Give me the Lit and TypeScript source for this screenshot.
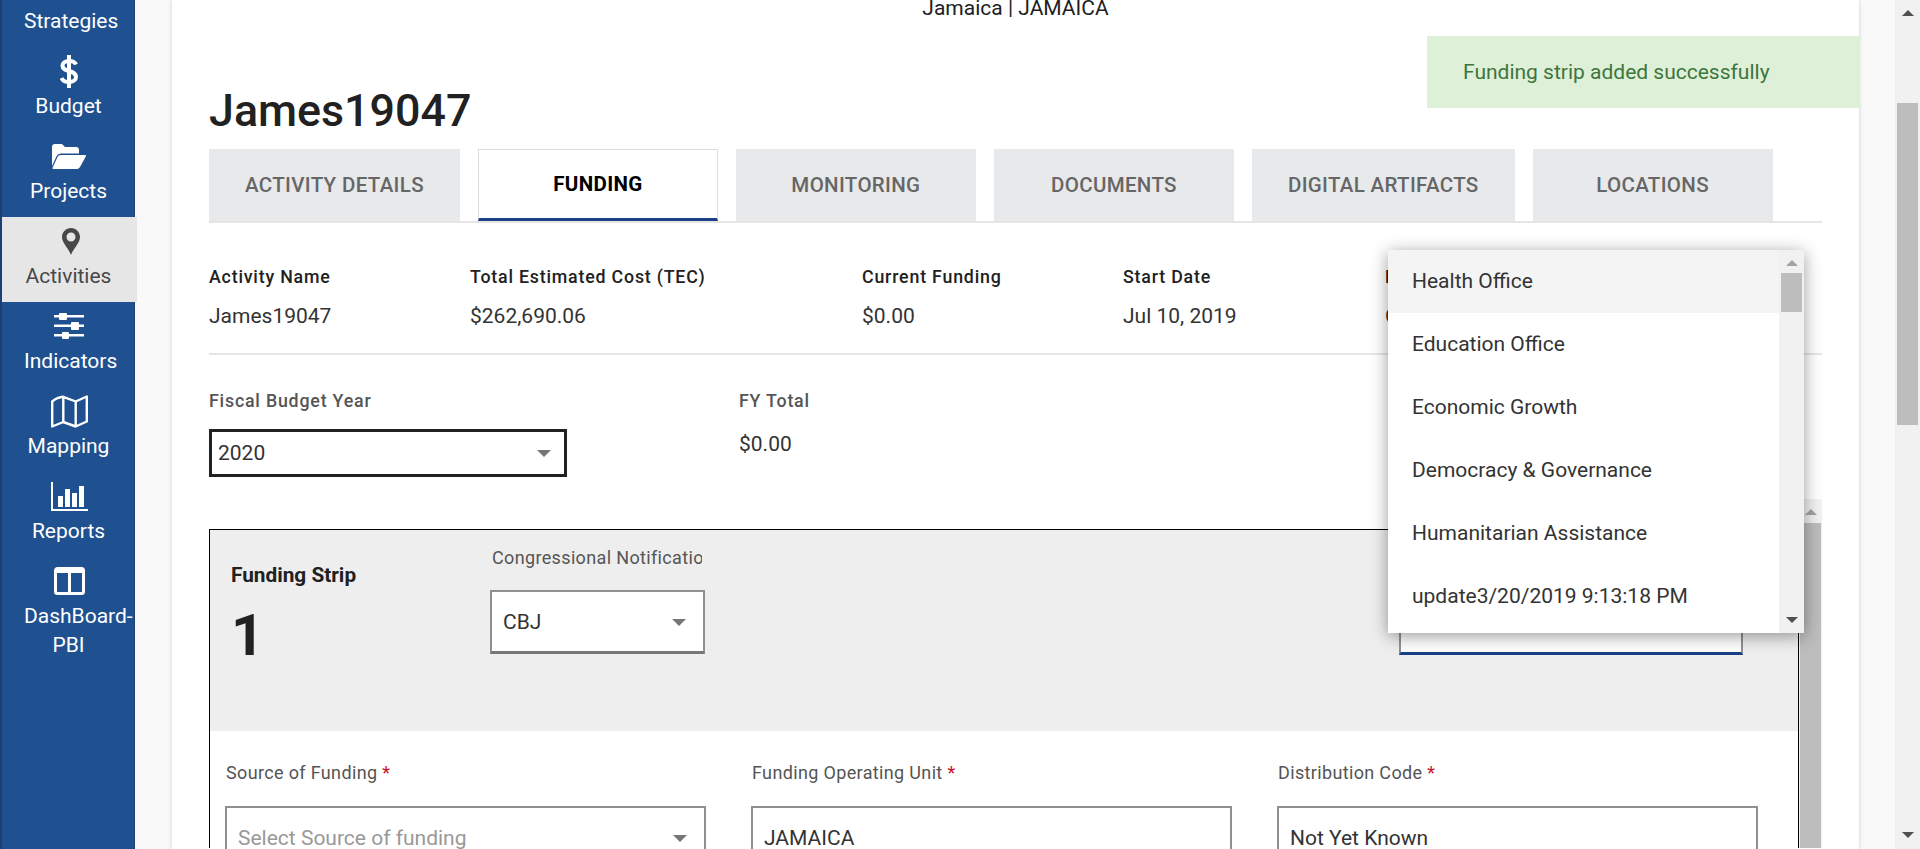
import { LitElement, html, css, svg } from "lit";
import { customElement } from "lit/decorators.js";

const icons: Record<string, unknown> = {
  dollar: svg`<svg class="i" width="18" height="33" viewBox="0 0 18 33"><path d="M16 9.500C15 7 12.500 6 9 6 5 6 2.500 7.800 2.500 10.800 2.500 17.500 16 14.500 16 22 16 25.200 13 27 9 27 5 27 2.700 25.500 1.500 23" fill="none" stroke="#fff" stroke-width="4"/><path d="M7 0h4v33H7z" fill="#fff"/></svg>`,
  folder: svg`<svg class="i" width="34" height="25" viewBox="0 0 34 25"><path d="M0 22V3a3 3 0 0 1 3-3h7l3 3h11a3 3 0 0 1 3 3v3.500H9a5 5 0 0 0-4.500 2.800Z" fill="#fff"/><path d="M8 11h25a1 1 0 0 1 .8 1.500L28 23a4 4 0 0 1-3 2H1.500a1 1 0 0 1-.8-1.500L5.500 13A4 4 0 0 1 8 11Z" fill="#fff"/></svg>`,
  pin: svg`<svg class="i" width="18" height="27" viewBox="0 0 18 27"><path fill-rule="evenodd" d="M9 0C4 0 0 4 0 9c0 6 7 12 9 18 2-6 9-12 9-18 0-5-4-9-9-9Zm0 4.500a4.500 4.500 0 1 1 0 9 4.500 4.500 0 0 1 0-9Z" fill="#484848"/></svg>`,
  sliders: svg`<svg class="i" width="30" height="27" viewBox="0 0 30 27"><g fill="#fff"><path d="M0 2h30v2.500H0zM0 11.500h30V14H0zM0 21h30v2.500H0z"/><rect x="5" y="0" width="8" height="7" rx="1"/><rect x="17" y="9" width="8" height="8" rx="1"/><rect x="8" y="19" width="7" height="7" rx="1"/></g></svg>`,
  map: svg`<svg class="i" width="37" height="33" viewBox="0 0 37 33"><path d="M1.200 6.500C6 2.500 9 2 12.300 1.800L24.700 6.500 35.800 1.500V26.500L24.700 31.500 12.300 27 1.200 31.500ZM12.300 1.800V27M24.700 6.500V31.500" fill="none" stroke="#fff" stroke-width="2.400" stroke-linejoin="round"/></svg>`,
  bars: svg`<svg class="i" width="37" height="29" viewBox="0 0 37 29"><g fill="#fff"><path d="M0 0h2v27h35v2H0z"/><rect x="7" y="14" width="5" height="11"/><rect x="14" y="7" width="5" height="18"/><rect x="21" y="11" width="5" height="14"/><rect x="28" y="4" width="5" height="21"/></g></svg>`,
  cols: svg`<svg class="i" width="31" height="28" viewBox="0 0 31 28"><path d="M3.500 1.500h24a2 2 0 0 1 2 2v21a2 2 0 0 1-2 2h-24a2 2 0 0 1-2-2v-21a2 2 0 0 1 2-2ZM15.500 4v22M2 4.500h27" fill="none" stroke="#fff" stroke-width="3"/></svg>`,
};

@customElement("app-root")
export class AppRoot extends LitElement {
  static styles = css`
    :host { display: flex; width: 1920px; height: 849px; overflow: hidden; background: #f9f9f9;
      font-family: Roboto, "Liberation Sans", sans-serif; color: #212121; }
    * { box-sizing: border-box; }
    .side { width: 135px; flex: none; height: 849px; background: #1f5190; border-left: 2px solid #1a4076; border-right: 1px solid #1a4076; position: relative; }
    .side-in { margin-top: -38px; }
    .nav { height: 85px; padding-top: 5px; color: #fff; font-size: 21px; line-height: 29px; }
    .nav .ic { height: 38px; display: flex; align-items: center; justify-content: center; padding-left: 2px; }
    .nav .tx { width: 89px; margin: 2px 0 0 22px; text-align: center; }
    .nav.on { background: #e6e6e6; color: #484848; width: 135px; }
    .nav.two { height: 120px; }
    .i { display: block; }
    .main { flex: 1; min-width: 0; padding: 0 36px 0 37px; }
    .card { height: 849px; background: #fff; box-shadow: 0 0 4px rgba(0,0,0,.18); padding: 0 37px; position: relative; overflow: hidden; }
    .ctx { height: 18px; line-height: 18px; margin-top: -1px; text-align: center; font-size: 21px; color: #212121; }
    h1 { margin: 63px 0 0; font-size: 44.800px; line-height: 62px; font-weight: 500; height: 69px; }
    .toast { position: absolute; left: 1255px; right: 0; top: 36px; height: 72px; background: #dff0d8; color: #3c763d; font-size: 21px; line-height: 72px; padding-left: 36px; border-radius: 2px 0 0 2px; }
    .tabs { display: flex; gap: 18px; height: 74px; border-bottom: 2px solid #e5e5e5; }
    .tab { min-width: 240px; padding: 0 36px; height: 72px; background: #e8e9eb; color: #666; font-size: 20.500px; font-weight: 500; line-height: 72px; text-align: center; letter-spacing: .34px; }
    .tab.on { background: #fff; color: #000; font-weight: 700; border: 1px solid #ddd; border-bottom: 3px solid #1a4185; line-height: 69px; }
    .info { display: flex; height: 132px; border-bottom: 2px solid #e5e5e5; padding-top: 42px; }
    .col { flex: none; }
    .lbl { font-size: 17.800px; font-weight: 500; letter-spacing: .8px; line-height: 24px; }
    .val { font-size: 21px; line-height: 24px; margin-top: 15px; color: #333; }
    .fy { display: flex; height: 144px; padding-top: 34px; }
    .fy .lbl { color: #555; }
    .fy .val { margin-top: 19px; }
    .fy .sel-wrap { width: 530px; }
    .sel { position: relative; background: #fff; border: 2px solid #909090; font-size: 21px; color: #333; display: flex; align-items: center; }
    .sel::after { content: ""; position: absolute; right: 17px; top: 50%; margin-top: -3px; border: 7.500px solid transparent; border-top: 7.500px solid #777; border-bottom: 0; }
    .sel.noarrow::after { display: none; }
    .sel.year { width: 358px; height: 48px; border: 3px solid #212121; margin-top: 16px; padding-left: 6px; }
    .sel.year::after { right: 13px; }
    .lower { display: flex; height: 349px; }
    .strip { flex: 1; min-width: 0; margin-top: 30px; border: 1px solid #000; border-bottom: 0; }
    .strip-head { height: 201px; background: #eee; display: flex; padding-left: 21px; position: relative; }
    .fs { width: 259px; padding-top: 32px; }
    .fs b { display: block; font-size: 20.800px; font-weight: 700; line-height: 26px; }
    .fs .n { font-size: 58px; font-weight: 700; line-height: 58px; margin-top: 18px; }
    .cn { width: 215px; padding-top: 16px; }
    .cn .t { font-size: 18px; line-height: 24px; letter-spacing: .35px; color: #555; width: 212px; overflow: hidden; white-space: nowrap; padding-left: 2px; }
    .cn .sel { height: 64px; margin-top: 20px; padding-left: 11px; border-bottom: 3px solid #777; width: 215px; }
    .focus { position: absolute; left: 1189px; width: 344px; top: 60px; height: 65px; background: #fff; border: 2px solid #909090; border-bottom: 3px solid #1a4185; }
    .fields { display: grid; grid-template-columns: repeat(3, 481px); column-gap: 45px; padding: 30px 0 0 15px; }
    .f .t { font-size: 18px; line-height: 24px; letter-spacing: .35px; color: #555; padding-left: 1px; }
    .f .t i { color: #c8102e; font-style: normal; }
    .f .sel { height: 63px; margin-top: 21px; padding-left: 11px; }
    .ph { color: #999; }
    .sb { flex: none; background: #f1f1f1; display: flex; flex-direction: column; align-items: center; position: relative; }
    .up, .dn { width: 0; height: 0; border: 6px solid transparent; flex: none; }
    .up { border-top: 0; border-bottom: 6px solid #505050; }
    .dn { border-bottom: 0; border-top: 6px solid #505050; }
    .thumb { background: #bdbdbd; flex: none; }
    .outer { width: 25px; height: 849px; flex: none; }
    .outer .up { margin-top: 10px; }
    .outer .thumb { width: 21px; height: 322px; margin-top: 87px; }
    .outer .dn { margin-top: auto; margin-bottom: 11px; }
    .inner { width: 23px; height: 349px; margin-top: 0; background: #f1f1f1; }
    .inner .up { margin-top: 10px; border-bottom-color: #a3a3a3; }
    .inner .thumb { width: 21px; flex: 1; margin-top: 8px; }
    .drop { position: absolute; left: 1216px; top: 250px; width: 416px; height: 383px; background: #fff; display: flex; box-shadow: 0 3px 16px rgba(0,0,0,.4); z-index: 3; }
    .opts { flex: 1; }
    .opt { height: 63px; line-height: 63px; padding-left: 24px; font-size: 21px; color: #333; }
    .opt.hov { background: #f4f4f4; }
    .drop .sb { width: 25px; height: 383px; }
    .drop .up { margin-top: 10px; border-bottom-color: #a3a3a3; }
    .drop .thumb { width: 21px; height: 39px; margin-top: 7px; }
    .drop .dn { margin-top: auto; margin-bottom: 10px; }
  `;

  nav(icon: string, label: string, cls = "") {
    return html`<div class="nav ${cls}"><div class="ic">${icons[icon]}</div><div class="tx">${label}</div></div>`;
  }

  info(w: number, l: string, v: string) {
    return html`<div class="col" style="width:${w}px"><div class="lbl">${l}</div><div class="val">${v}</div></div>`;
  }

  field(l: string, v: string, ph = false, arrow = true) {
    return html`<div class="f"><div class="t">${l} <i>*</i></div><div class="sel ${arrow ? "" : "noarrow"} ${ph ? "ph" : ""}">${v}</div></div>`;
  }

  render() {
    return html`
      <aside class="side"><div class="side-in">
        <div class="nav"><div class="ic"></div><div class="tx">Strategies</div></div>
        ${this.nav("dollar", "Budget")}
        ${this.nav("folder", "Projects")}
        ${this.nav("pin", "Activities", "on")}
        ${this.nav("sliders", "Indicators")}
        ${this.nav("map", "Mapping")}
        ${this.nav("bars", "Reports")}
        ${this.nav("cols", "DashBoard-PBI", "two")}
      </div></aside>
      <main class="main"><section class="card">
        <div class="ctx">Jamaica | JAMAICA</div>
        <div class="toast">Funding strip added successfully</div>
        <h1>James19047</h1>
        <nav class="tabs">
          <div class="tab">ACTIVITY DETAILS</div>
          <div class="tab on">FUNDING</div>
          <div class="tab">MONITORING</div>
          <div class="tab">DOCUMENTS</div>
          <div class="tab">DIGITAL ARTIFACTS</div>
          <div class="tab">LOCATIONS</div>
        </nav>
        <div class="info">
          ${this.info(261, "Activity Name", "James19047")}
          ${this.info(392, "Total Estimated Cost (TEC)", "$262,690.06")}
          ${this.info(261, "Current Funding", "$0.00")}
          ${this.info(262, "Start Date", "Jul 10, 2019")}
          ${this.info(200, "End Date", "Oct 1, 2020")}
        </div>
        <div class="fy">
          <div class="sel-wrap"><div class="lbl">Fiscal Budget Year</div><div class="sel year">2020</div></div>
          <div><div class="lbl">FY Total</div><div class="val">$0.00</div></div>
        </div>
        <div class="lower">
          <div class="strip">
            <div class="strip-head">
              <div class="fs"><b>Funding Strip</b><div class="n">1</div></div>
              <div class="cn"><div class="t">Congressional Notification</div><div class="sel">CBJ</div></div>
              <div class="focus"></div>
            </div>
            <div class="fields">
              ${this.field("Source of Funding", "Select Source of funding", true)}
              ${this.field("Funding Operating Unit", "JAMAICA", false, false)}
              ${this.field("Distribution Code", "Not Yet Known", false, false)}
            </div>
          </div>
          <div class="sb inner"><div class="up"></div><div class="thumb"></div></div>
        </div>
        <div class="drop">
          <div class="opts">
            <div class="opt hov">Health Office</div>
            <div class="opt">Education Office</div>
            <div class="opt">Economic Growth</div>
            <div class="opt">Democracy &amp; Governance</div>
            <div class="opt">Humanitarian Assistance</div>
            <div class="opt">update3/20/2019 9:13:18 PM</div>
          </div>
          <div class="sb"><div class="up"></div><div class="thumb"></div><div class="dn"></div></div>
        </div>
      </section></main>
      <div class="sb outer"><div class="up"></div><div class="thumb"></div><div class="dn"></div></div>
    `;
  }
}
